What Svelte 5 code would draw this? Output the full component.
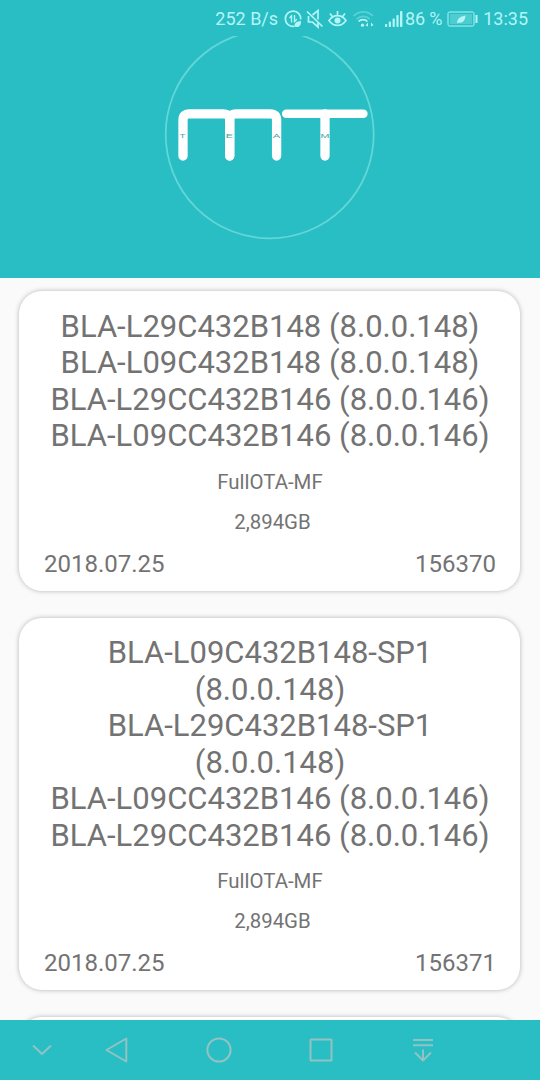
<!--
  Firmware list screen: status bar, logo header, build cards, navigation bar
-->
<script>
  const builds = [
    {
      names: [
        'BLA-L29C432B148 (8.0.0.148)',
        'BLA-L09C432B148 (8.0.0.148)',
        'BLA-L29CC432B146 (8.0.0.146)',
        'BLA-L09CC432B146 (8.0.0.146)'
      ],
      type: 'FullOTA-MF',
      size: '2,894GB',
      date: '2018.07.25',
      id: '156370'
    },
    {
      names: [
        'BLA-L09C432B148-SP1 (8.0.0.148)',
        'BLA-L29C432B148-SP1 (8.0.0.148)',
        'BLA-L09CC432B146 (8.0.0.146)',
        'BLA-L29CC432B146 (8.0.0.146)'
      ],
      type: 'FullOTA-MF',
      size: '2,894GB',
      date: '2018.07.25',
      id: '156371'
    }
  ]

  const team = [
    { letter: 'T', x: 15.5, width: 6 },
    { letter: 'E', x: 61.5, width: 7.5 },
    { letter: 'A', x: 108.5, width: 8 },
    { letter: 'M', x: 156.5, width: 9 }
  ]
</script>

<div class="screen">
  <header>
    <div class="status">
      <span class="speed">252 B/s</span>
      <svg class="icons" width="92" height="24" viewBox="0 0 92 24" fill="none" stroke="currentColor" stroke-width="1.7">
        <!-- data saver -->
        <path d="M11 19.400A7.700 7.700 0 1 1 17.700 12.500" />
        <path d="M6.500 11l2-2v6.500M11.500 8v6.500l2.300-2.300" stroke-width="1.4" />
        <path d="M11.500 20c-.5-4 2-5.800 6.500-6 .2 4-1.500 6.500-5 6z" fill="currentColor" stroke="none" />
        <!-- muted -->
        <path d="M24 4.500l15.500 15M25.500 9v6h4l5.500 5v-5M29.500 8l5.500-4.500v9" stroke-width="1.7" />
        <!-- eye -->
        <path d="M46 13.500c4.500-6.500 12.500-6.500 17 0-4.500 6.500-12.500 6.500-17 0zM47 6.500l2.500 3.200M54.500 4v4.500M62 6.500l-2.500 3.200" stroke-width="1.7" />
        <circle cx="54.500" cy="13.500" r="3" fill="currentColor" stroke="none" />
        <!-- wifi -->
        <path d="M70.500 9c5.500-5.500 14-5.500 19.500 0M73.500 12.200c4-3.700 9.500-3.700 13.500 0" opacity=".35" />
        <path d="M75.500 14.500c2.500-2.500 6.500-2.500 9 0" />
        <circle cx="79.500" cy="18.200" r="1.600" fill="currentColor" stroke="none" />
        <path d="M82.500 18.500l2.500-3v4zM90.500 18l-2.500-2.500v4z" fill="currentColor" stroke="none" />
      </svg>
      <svg class="signal" width="19" height="20" viewBox="0 0 19 20" fill="currentColor">
        <rect x="1" y="15" width="2.200" height="3" rx=".8" />
        <rect x="4.800" y="12.500" width="2.200" height="5.500" rx=".8" />
        <rect x="8.600" y="9.500" width="2.200" height="8.500" rx=".8" />
        <rect x="12.400" y="6" width="2.200" height="12" rx=".8" />
        <rect x="16" y="2" width="2.400" height="16" rx=".8" />
      </svg>
      <span class="percent">86 %</span>
      <svg class="battery" width="32" height="18" viewBox="0 0 32 18">
        <rect x="1" y="2" width="26" height="14" rx="1.500" fill="none" stroke="currentColor" />
        <rect x="3" y="4" width="22" height="10" fill="currentColor" opacity=".28" />
        <path d="M10 13.500c.2-5 3-7 8.500-8-.5 5-2.500 8-7 7z" fill="currentColor" />
        <rect x="28.500" y="5" width="2" height="8" fill="currentColor" />
      </svg>
      <span class="clock">13:35</span>
    </div>
    <svg class="logo" width="212" height="206" viewBox="0 0 212 206">
      <circle cx="105.700" cy="98.300" r="104" fill="none" stroke="#62d6d8" stroke-width="1.800" />
      <g fill="none" stroke="#fff" stroke-width="9.300" stroke-linecap="round">
        <path d="M19 120V84q0-6.200 6.200-6.200h34q6.500 0 6.500 6.200v36" />
        <path d="M65.700 120V84q0-6.200 6.200-6.200h34.500q6.200 0 6.200 6.200v36" />
        <path d="M161 78v42" />
        <path d="M122.200 77.800h77.200" stroke-width="8.500" />
      </g>
      {#each team as t}
        <text x={t.x} y="102" textLength={t.width} lengthAdjust="spacingAndGlyphs">{t.letter}</text>
      {/each}
    </svg>
  </header>

  <main>
    {#each builds as build}
      <article class="card">
        <h2>
          {#each build.names as name}
            <span>{name}</span>
          {/each}
        </h2>
        <p>{build.type}</p>
        <p class="size">{build.size}</p>
        <footer>
          <span>{build.date}</span>
          <span>{build.id}</span>
        </footer>
      </article>
    {/each}
    <article class="card next"></article>
  </main>

  <nav>
    <button aria-label="Hide">
      <svg viewBox="0 0 30 30"><path d="M6 10.500l9 8.500 9-8.500" /></svg>
    </button>
    <button aria-label="Back">
      <svg viewBox="0 0 30 30"><path d="M24.300 3.500v23L4.500 15z" /></svg>
    </button>
    <button aria-label="Home">
      <svg viewBox="0 0 30 30"><circle cx="15" cy="15" r="11.600" /></svg>
    </button>
    <button aria-label="Recent">
      <svg viewBox="0 0 30 30"><rect x="4.500" y="4.500" width="21" height="21" rx=".5" /></svg>
    </button>
    <button aria-label="Notifications">
      <svg viewBox="0 0 30 30"><path d="M5 5h20M5 10.200h20M15 14.500v11M7 17.500l8 8 8-8" /></svg>
    </button>
  </nav>
</div>

<style>
  :global(body) {
    margin: 0;
  }

  .screen {
    width: 540px;
    height: 1080px;
    display: flex;
    flex-direction: column;
    overflow: hidden;
    background: #fafafa;
    color: #737373;
    font-family: Roboto, sans-serif;
  }

  header {
    height: 278px;
    flex-shrink: 0;
    background: #28bec4;
  }

  .status {
    height: 36px;
    display: flex;
    align-items: center;
    justify-content: flex-end;
    box-sizing: border-box;
    padding: 1px 12px 0 0;
    color: #b4f5f6;
    font-size: 18px;
    white-space: nowrap;
  }

  .icons {
    margin: 0 9px 0 5px;
  }

  .percent {
    margin: 0 5px 0 2px;
    letter-spacing: -0.2px;
  }

  .clock {
    margin-left: 4px;
  }

  .logo {
    display: block;
    margin-left: 164px;
  }

  .logo text {
    fill: #4fa9ab;
    font-family: Roboto, sans-serif;
    font-size: 6px;
  }

  main {
    flex: 1;
    min-height: 0;
    overflow: hidden;
    display: flex;
    flex-direction: column;
    gap: 27px;
    padding: 13px 20px 0 19px;
  }

  .card {
    flex-shrink: 0;
    box-sizing: border-box;
    padding: 17.5px 24px 13px;
    border-radius: 23px;
    background: #fff;
    box-shadow: 0 0 5px rgba(0, 0, 0, 0.28);
    text-align: center;
  }

  .next {
    height: 80px;
  }

  h2 {
    margin: 0 0 15px;
    font-size: 31px;
    font-weight: 400;
    line-height: 36.5px;
  }

  h2 span {
    display: block;
    padding: 0 5px 0 6px;
  }

  p {
    margin: 0 0 16px;
    padding-left: 1px;
    font-size: 20.4px;
    line-height: 24px;
  }

  .size {
    padding-left: 6px;
  }

  footer {
    display: flex;
    justify-content: space-between;
    padding-left: 1px;
    font-size: 24px;
    line-height: 28px;
  }

  nav {
    height: 60px;
    flex-shrink: 0;
    display: flex;
    align-items: center;
    box-sizing: border-box;
    padding-left: 27px;
    background: #28bec4;
  }

  button {
    width: 30px;
    height: 30px;
    padding: 0;
    border: 0;
    background: none;
    color: #93c2c2;
  }

  button:nth-child(2) {
    margin-left: 45px;
  }

  button:nth-child(n + 3) {
    margin-left: 72px;
  }

  button svg {
    display: block;
    fill: none;
    stroke: currentColor;
    stroke-width: 2;
    stroke-linejoin: round;
  }
</style>
